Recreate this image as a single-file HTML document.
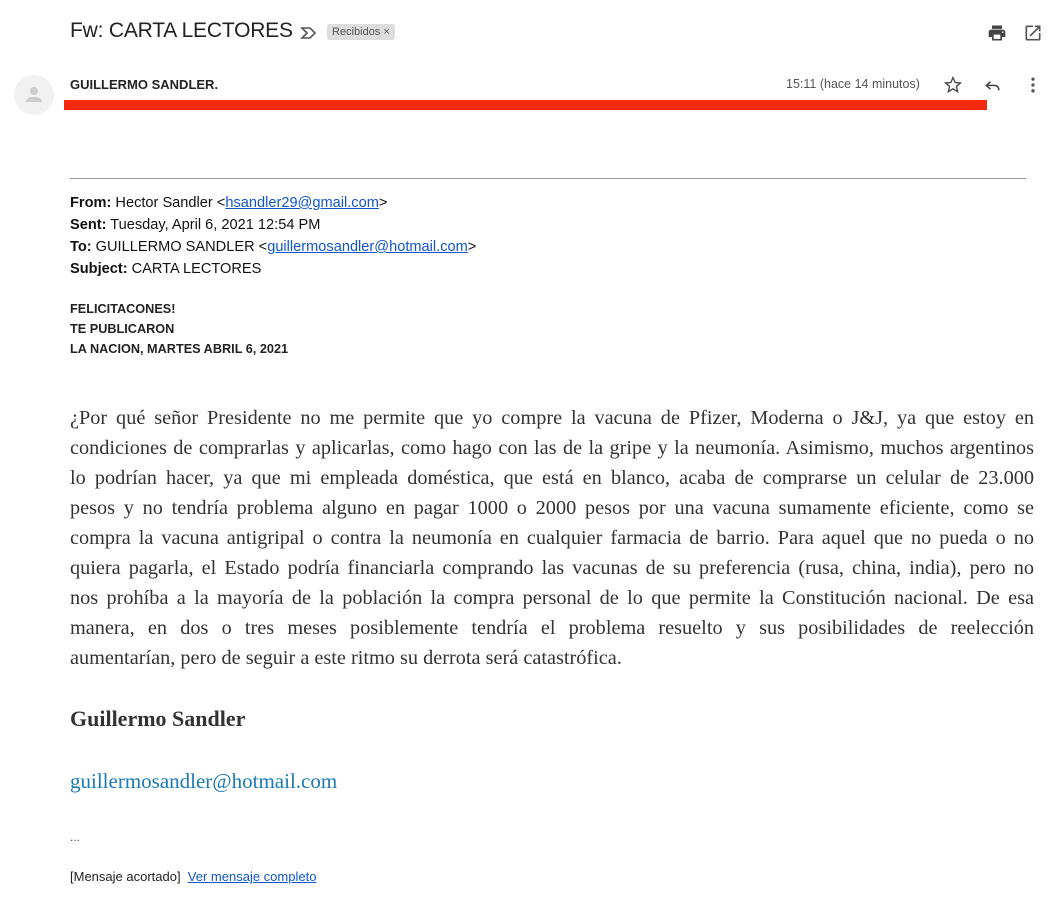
<!DOCTYPE html>
<html><head><meta charset="utf-8"><style>
body{margin:0;width:1056px;height:922px;background:#fff;position:relative;font-family:"Liberation Sans",Arial,sans-serif;overflow:hidden}
.a{position:absolute}
.t{left:70px;top:19px;font-size:21px;color:#222;letter-spacing:-0.2px}
.lbl{left:327px;top:24px;background:#ddd;color:#555;font-size:11px;padding:2px 5px;border-radius:3px}
.av{left:14px;top:75px;width:40px;height:40px;border-radius:50%;background:#f1f1f1}
.nm{left:70px;top:77px;font-size:13px;font-weight:bold;color:#222}
.tm{left:786px;top:77px;font-size:12.5px;color:#555}
.red{left:64px;top:100px;width:923px;height:10px;background:#f42a0e}
.hr{left:70px;top:178px;width:956px;height:1px;background:#999}
.hd{left:70px;top:192px;font-size:14.6px;line-height:22px;color:#111}
.hd a,.ln a{color:#1155cc}
.pb{left:70px;top:299px;font-size:12.7px;font-weight:bold;line-height:20px;color:#222}
.body{left:70px;top:403px;width:964px;font-family:"Liberation Serif",Georgia,serif;font-size:20.3px;line-height:30px;color:#333}
.body div{text-align:justify;text-align-last:justify;white-space:nowrap;height:30px}
.body div.l{text-align-last:left}
.sig{left:70px;top:706px;font-family:"Liberation Serif",serif;font-size:22px;font-weight:bold;color:#333}
.em{left:70px;top:769px;font-family:"Liberation Serif",serif;font-size:21px;color:#1a7ab5}
.dots{left:70px;top:830px;font-size:12px;color:#444}
.ln{left:70px;top:869px;font-size:13px;color:#222}
</style></head><body>
<div class="a t">Fw: CARTA LECTORES</div>
<svg class="a" style="left:300px;top:26px" width="18" height="14" viewBox="0 0 18 14"><path d="M2 2h8l5 5-5 5H2l5-5z" fill="none" stroke="#555" stroke-width="1.6"/></svg>
<div class="a lbl">Recibidos ×</div>
<svg class="a" style="left:987px;top:23px" width="20" height="20" viewBox="0 0 24 24"><path d="M19 8H5c-1.7 0-3 1.3-3 3v6h4v4h12v-4h4v-6c0-1.7-1.3-3-3-3zm-3 11H8v-5h8v5zm3-7c-.6 0-1-.4-1-1s.4-1 1-1 1 .4 1 1-.4 1-1 1zm-1-9H6v4h12V3z" fill="#444"/></svg>
<svg class="a" style="left:1023px;top:23px" width="20" height="20" viewBox="0 0 24 24"><path d="M19 19H5V5h7V3H5a2 2 0 0 0-2 2v14a2 2 0 0 0 2 2h14a2 2 0 0 0 2-2v-7h-2v7zM14 3v2h3.6l-9.8 9.8 1.4 1.4L19 6.4V10h2V3h-7z" fill="#555"/></svg>
<div class="a av"><svg width="40" height="40" viewBox="0 0 40 40"><circle cx="20" cy="16" r="4" fill="#ccc"/><path d="M12 27c0-4 4-5 8-5s8 1 8 5z" fill="#ccc"/></svg></div>
<div class="a nm">GUILLERMO SANDLER.</div>
<div class="a tm">15:11 (hace 14 minutos)</div>
<svg class="a" style="left:943px;top:75px" width="20" height="20" viewBox="0 0 24 24"><path d="M12 3l2.6 6 6.4.5-4.9 4.2 1.5 6.3L12 16.6 6.4 20l1.5-6.3L3 9.5 9.4 9z" fill="none" stroke="#444" stroke-width="1.6"/></svg>
<svg class="a" style="left:983px;top:75px" width="20" height="20" viewBox="0 0 24 24"><path d="M9 8L4 12.5 9 17M4 12.5h9c4 0 6 2 6 6" fill="none" stroke="#444" stroke-width="1.8"/></svg>
<svg class="a" style="left:1023px;top:75px" width="20" height="20" viewBox="0 0 24 24"><circle cx="12" cy="5" r="2" fill="#555"/><circle cx="12" cy="12" r="2" fill="#555"/><circle cx="12" cy="19" r="2" fill="#555"/></svg>
<div class="a red"></div>
<div class="a hr"></div>
<div class="a hd"><b>From:</b> Hector Sandler &lt;<a href="#">hsandler29@gmail.com</a>&gt;<br><b>Sent:</b> Tuesday, April 6, 2021 12:54 PM<br><b>To:</b> GUILLERMO SANDLER &lt;<a href="#">guillermosandler@hotmail.com</a>&gt;<br><b>Subject:</b> CARTA LECTORES</div>
<div class="a pb">FELICITACONES!<br>TE PUBLICARON<br>LA NACION, MARTES ABRIL 6, 2021</div>
<div class="a body">
<div>¿Por qué señor Presidente no me permite que yo compre la vacuna de Pfizer, Moderna o J&amp;J, ya que estoy en</div>
<div>condiciones de comprarlas y aplicarlas, como hago con las de la gripe y la neumonía. Asimismo, muchos argentinos</div>
<div>lo podrían hacer, ya que mi empleada doméstica, que está en blanco, acaba de comprarse un celular de 23.000</div>
<div>pesos y no tendría problema alguno en pagar 1000 o 2000 pesos por una vacuna sumamente eficiente, como se</div>
<div>compra la vacuna antigripal o contra la neumonía en cualquier farmacia de barrio. Para aquel que no pueda o no</div>
<div>quiera pagarla, el Estado podría financiarla comprando las vacunas de su preferencia (rusa, china, india), pero no</div>
<div>nos prohíba a la mayoría de la población la compra personal de lo que permite la Constitución nacional. De esa</div>
<div>manera, en dos o tres meses posiblemente tendría el problema resuelto y sus posibilidades de reelección</div>
<div class="l">aumentarían, pero de seguir a este ritmo su derrota será catastrófica.</div>
</div>
<div class="a sig">Guillermo Sandler</div>
<div class="a em">guillermosandler@hotmail.com</div>
<div class="a dots">...</div>
<div class="a ln">[Mensaje acortado]&nbsp; <a href="#">Ver mensaje completo</a></div>
</body></html>
